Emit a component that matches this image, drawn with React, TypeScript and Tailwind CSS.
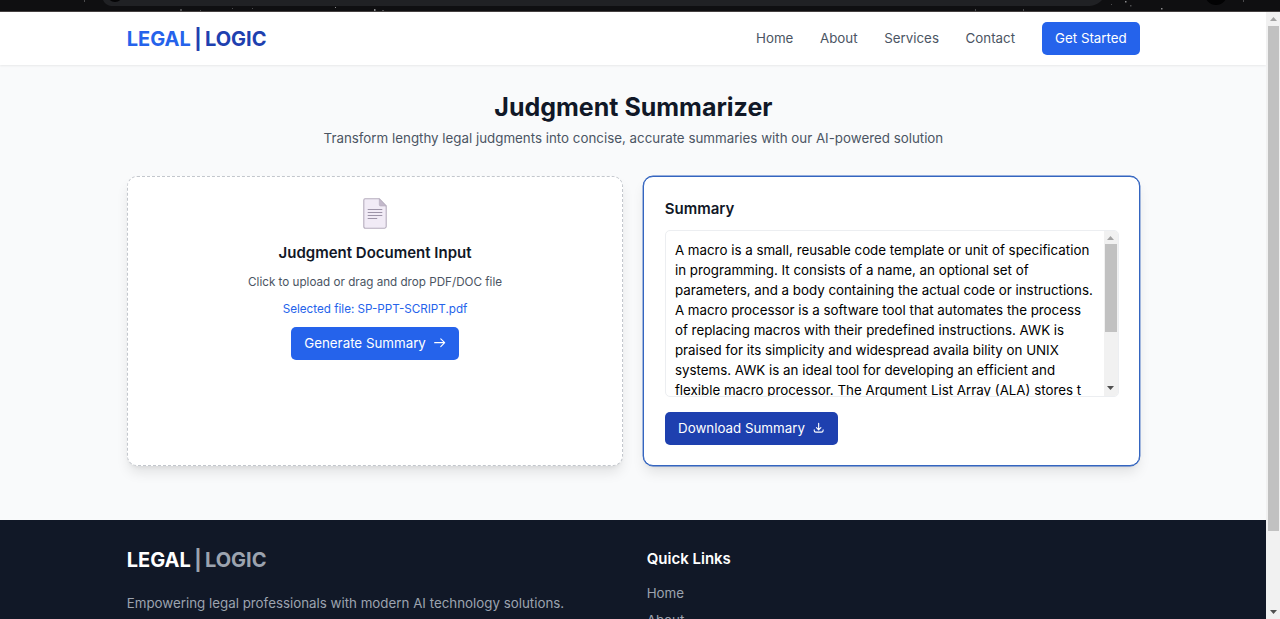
import type { ReactNode } from "react";

const summaryLines = [
  "A macro is a small, reusable code template or unit of specification",
  "in programming. It consists of a name, an optional set of",
  "parameters, and a body containing the actual code or instructions.",
  "A macro processor is a software tool that automates the process",
  "of replacing macros with their predefined instructions. AWK is",
  "praised for its simplicity and widespread availa bility on UNIX",
  "systems. AWK is an ideal tool for developing an efficient and",
  "flexible macro processor. The Argument List Array (ALA) stores t",
];

const navItems = ["Home", "About", "Services", "Contact"];

function BrowserEdge() {
  return (
    <div className="h-3 shrink-0 overflow-hidden border-b border-[#454141] bg-[#0f0f11]">
      <svg width="1280" height="11" viewBox="0 0 1280 11" className="block">
        <path d="M103 0C105 4 108 6 113 6H1087C1094 6 1098 4 1102 0Z" fill="#202124" />
        <circle cx="115" cy="-6" r="8" fill="#050506" />
        <circle cx="1216" cy="-6" r="11" fill="#020203" />
        <g fill="#8a8a8c">
          <rect x="1125" y="1" width="1.5" height="1.5" />
          <rect x="1161" y="8" width="1.5" height="1.5" />
          <rect x="335" y="7" width="1" height="1" />
          <rect x="374" y="9" width="1.5" height="2" />
        </g>
        <g fill="#4b4b4d">
          <rect x="84" y="0" width="1" height="2" />
          <rect x="180" y="9" width="2" height="2" />
          <rect x="200" y="10" width="1" height="1" />
          <rect x="232" y="8" width="1" height="1" />
          <rect x="252" y="8" width="1" height="1" />
          <rect x="382" y="10" width="2" height="1" />
          <rect x="975" y="9" width="1" height="2" />
          <rect x="1023" y="9" width="1" height="2" />
          <rect x="1111" y="4" width="1" height="1" />
          <rect x="1130" y="5" width="1.5" height="1.5" />
          <rect x="1243" y="0" width="1" height="2" />
        </g>
      </svg>
    </div>
  );
}

function Logo({ left, right }: { left: string; right: string }) {
  return (
    <div className="flex items-center gap-[3.33px] text-[20px] leading-[26.67px] font-bold">
      <span className={left}>LEGAL</span>
      <span className={right}>|</span>
      <span className={right}>LOGIC</span>
    </div>
  );
}

function Button({ className, children }: { className: string; children: ReactNode }) {
  return (
    <button
      className={`flex h-[33.33px] items-center gap-[6.67px] rounded-[5px] px-[13.33px] pb-[1.2px] text-[13.33px] leading-5 whitespace-nowrap text-white ${className}`}
    >
      {children}
    </button>
  );
}

function Icon({ d }: { d: string }) {
  return (
    <svg
      className="size-[13.33px]"
      viewBox="0 0 24 24"
      fill="none"
      stroke="currentColor"
      strokeWidth="2"
      strokeLinecap="round"
      strokeLinejoin="round"
    >
      <path d={d} />
    </svg>
  );
}

function DocumentIcon() {
  return (
    <svg width="24" height="31" viewBox="0 0 24 31" fill="none">
      <path d="M2 .8H16.3L23.2 8V28.6Q23.2 30.2 21.6 30.2H2.4Q.8 30.2 .8 28.6V2.2Q.8 .8 2 .8Z" fill="#f1ebf6" stroke="#b5adbd" strokeWidth="1.1" />
      <path d="M16.3 .8L23.2 8H17.5Q16.3 8 16.3 6.8Z" fill="#c3b9cb" stroke="#b5adbd" strokeWidth=".6" />
      <path d="M4.7 11.5H19.3M4.7 14.5H19.3M4.7 17.5H19.3M4.7 20.5H14.2" stroke="#9d94a8" strokeWidth="1.2" />
    </svg>
  );
}

function Arrow({ down }: { down?: boolean }) {
  return (
    <svg width="7" height="4" viewBox="0 0 7 4" className="shrink-0">
      <path d={down ? "M0 0H7L3.5 4Z" : "M0 4H7L3.5 0Z"} fill={down ? "#505050" : "#a3a3a3"} />
    </svg>
  );
}

export default function App() {
  return (
    <div className="flex h-[619px] w-full flex-col overflow-hidden font-['Inter',sans-serif] text-[13.33px] leading-5">
      <BrowserEdge />
      <div className="flex min-h-0 flex-1">
        <div className="flex min-w-0 flex-1 flex-col overflow-hidden bg-[#f9fafb]">
          <header className="flex h-[53.33px] shrink-0 justify-center bg-white pl-[0.8px] shadow-[0_1px_2px_rgba(0,0,0,0.07)]">
            <div className="flex w-[1013.33px] items-center justify-between">
              <div className="pt-[1.2px]">
                <Logo left="text-[#2563eb]" right="text-[#1e40af]" />
              </div>
              <nav className="flex items-center gap-[26.67px] text-[#4b5563]">
                {navItems.map((item) => (
                  <a key={item} className="pb-[1.2px]">
                    {item}
                  </a>
                ))}
                <Button className="bg-[#2563eb]">Get Started</Button>
              </nav>
            </div>
          </header>

          <main className="flex h-[454.67px] shrink-0 flex-col items-center pt-[26.67px] pl-[0.8px]">
            <h1 className="text-center text-[25px] leading-[30px] font-bold text-[#111827]">Judgment Summarizer</h1>
            <p className="mt-[5.8px] mb-[27.8px] text-center text-[#4b5563]">
              Transform lengthy legal judgments into concise, accurate summaries with our AI-powered solution
            </p>
            <div className="grid h-[290.2px] w-[1013.33px] grid-cols-2 gap-5">
              <section className="flex flex-col items-center rounded-[10px] border border-dashed border-[#c3c7cd] bg-white pt-[20.4px] shadow-[0_8px_13px_-2px_rgba(0,0,0,0.1),0_3px_5px_-3px_rgba(0,0,0,0.1)]">
                <div className="flex h-[33.33px] items-center">
                  <DocumentIcon />
                </div>
                <h2 className="mt-[10.6px] text-[15px] leading-[23.33px] font-semibold text-[#111827]">
                  Judgment Document Input
                </h2>
                <p className="mt-[9.4px] text-[11.67px] leading-[16.67px] text-[#4b5563]">
                  Click to upload or drag and drop PDF/DOC file
                </p>
                <p className="mt-[10.6px] mb-[9px] text-[11.67px] leading-[16.67px] text-[#2563eb]">
                  Selected file: SP-PPT-SCRIPT.pdf
                </p>
                <Button className="bg-[#2563eb]">
                  Generate Summary
                  <Icon d="M14 5l7 7m0 0l-7 7m7-7H3" />
                </Button>
              </section>

              <section className="rounded-[10px] border border-[#3465c0] bg-white px-[20.33px] pt-[20.4px] shadow-[0_0_0_0.4px_#3465c0,0_8px_13px_-2px_rgba(0,0,0,0.1),0_3px_5px_-3px_rgba(0,0,0,0.1)]">
                <h2 className="text-[15px] leading-[23.33px] font-semibold text-[#111827]">Summary</h2>
                <div className="mt-2.5 mb-[15px] flex h-[166.67px] overflow-hidden rounded-[5px] border border-[#eceef1] bg-white">
                  <div className="min-w-0 flex-1 pt-[9px] pl-[9.2px] whitespace-nowrap text-black">
                    {summaryLines.map((line) => (
                      <p key={line}>{line}</p>
                    ))}
                  </div>
                  <div className="flex w-3.5 shrink-0 flex-col items-center bg-[#f1f1f1] pt-[5px] pb-[6px]">
                    <Arrow />
                    <div className="mt-1 h-[88px] w-3 bg-[#c1c1c1]" />
                    <div className="flex-1" />
                    <Arrow down />
                  </div>
                </div>
                <Button className="bg-[#1e40af]">
                  Download Summary
                  <Icon d="M4 16v1a3 3 0 003 3h10a3 3 0 003-3v-1m-4-4l-4 4m0 0l-4-4m4 4V4" />
                </Button>
              </section>
            </div>
          </main>

          <footer className="flex flex-1 justify-center bg-[#111827] pt-[26.67px] pl-[0.8px] text-[#9ca3af]">
            <div className="grid h-0 w-[1013.33px] grid-cols-2 gap-[26.67px]">
              <div>
                <Logo left="text-white" right="text-[#9ca3af]" />
                <p className="mt-5">Empowering legal professionals with modern AI technology solutions.</p>
              </div>
              <div>
                <h3 className="mb-[13.33px] text-[15px] leading-[23.33px] font-semibold text-white">Quick Links</h3>
                <div className="flex flex-col gap-[6.67px]">
                  <a>Home</a>
                  <a>About</a>
                </div>
              </div>
            </div>
          </footer>
        </div>

        <div className="flex w-3.5 shrink-0 flex-col items-center bg-[#f1f1f1] pt-[5px] pb-[5px]">
          <Arrow />
          <div className="mt-[5px] ml-px h-[505px] w-[11px] shrink-0 bg-[#c1c1c1]" />
          <div className="flex-1" />
          <Arrow down />
        </div>
      </div>
    </div>
  );
}
